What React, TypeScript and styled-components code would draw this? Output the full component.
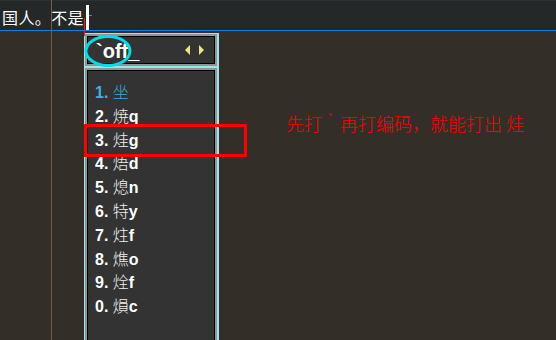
import React from 'react';
import styled, { createGlobalStyle } from 'styled-components';

const Global = createGlobalStyle`
  html, body { margin: 0; padding: 0; background: #332f28; }
  body { font-family: "Liberation Sans", "Noto Sans CJK SC", sans-serif; }
`;

const Screen = styled.div`
  position: relative;
  width: 556px;
  height: 340px;
  overflow: hidden;
  background: #332f28;
  display: flex;
  flex-direction: column;
  &::after {
    content: '';
    position: absolute;
    left: 51px;
    top: 0;
    width: 1px;
    height: 100%;
    background: #7e5a45;
  }
`;

const TopBar = styled.div`
  background: #242828;
  border-top: 1px solid #2d3030;
  border-bottom: 1px solid #0a7ef2;
  box-sizing: border-box;
  height: 31px;
  display: flex;
  align-items: flex-end;
  padding-left: 2px;
`;

const Typed = styled.span`
  color: #ffffff;
  font-family: "Noto Sans CJK SC", sans-serif;
  font-size: 16px;
  font-weight: 400;
  line-height: 26px;
  letter-spacing: 0.4px;
`;

const Caret = styled.span`
  display: block;
  flex: none;
  align-self: flex-end;
  width: 3px;
  height: 25px;
  margin-left: 2px;
  background: #ffffff;
  position: relative;
  z-index: 4;
`;

const Body = styled.div`
  flex: 1;
`;

const ImeMark = styled.div`
  position: absolute;
  left: 84px;
  top: 18px;
  width: 1px;
  height: 18px;
  background: #ff1a1a;
  z-index: 3;
`;

const Tick = styled.div`
  position: absolute;
  left: 89px;
  top: 15px;
  width: 3px;
  height: 1px;
  background: #2a8cf0;
  z-index: 5;
`;

const Popup = styled.div`
  position: absolute;
  left: 84px;
  top: 33px;
  width: 135px;
  height: 312px;
  box-sizing: border-box;
  background: #9fe2ec;
  padding: 1px 2px 0 1px;
  display: flex;
  flex-direction: column;
  gap: 2px;
  z-index: 1;
`;

const Panel = styled.div<{ $grow?: boolean }>`
  background: #333333;
  border: 2px solid #8d9595;
  box-shadow: inset 0 0 0 1px #000;
  box-sizing: border-box;
  ${(p) => (p.$grow ? 'flex: 1;' : 'height: 32px; flex: none;')}
`;

const Header = styled(Panel)`
  display: flex;
  align-items: center;
  padding: 2px 10px 0 9px;
`;

const Code = styled.span`
  color: #ffffff;
  font-weight: 700;
  font-size: 20px;
  line-height: 22px;
  flex: 1;
`;

const Pager = styled.svg`
  display: block;
  margin-top: -2px;
`;

const List = styled(Panel)`
  padding: 10px 0 0 8px;
`;

const Item = styled.div<{ $active?: boolean }>`
  height: 23.8px;
  line-height: 23.8px;
  white-space: nowrap;
  color: ${(p) => (p.$active ? '#3ab3e4' : '#ffffff')};
  font-size: 16px;
`;

const Num = styled.span`
  font-weight: 700;
`;

const Han = styled.span`
  font-family: "Noto Sans CJK SC", sans-serif;
  font-weight: 300;
  opacity: 0.92;
`;

const Key = styled.span`
  font-weight: 700;
`;

const Circle = styled.svg`
  position: absolute;
  left: 84px;
  top: 34px;
  z-index: 2;
`;

const Highlight = styled.div`
  position: absolute;
  left: 84px;
  top: 124px;
  width: 163px;
  height: 33px;
  box-sizing: border-box;
  border: 3px solid #ff0000;
  z-index: 2;
`;

const Note = styled.div`
  position: absolute;
  left: 286px;
  top: 112px;
  color: #ff0000;
  font-family: "Noto Sans CJK SC", sans-serif;
  font-weight: 300;
  font-size: 18px;
  line-height: 22px;
  white-space: nowrap;
`;

const items: { n: string; h: string; k: string }[] = [
  { n: '1.', h: '坐', k: '' },
  { n: '2.', h: '焼', k: 'q' },
  { n: '3.', h: '烓', k: 'g' },
  { n: '4.', h: '焐', k: 'd' },
  { n: '5.', h: '熄', k: 'n' },
  { n: '6.', h: '特', k: 'y' },
  { n: '7.', h: '炷', k: 'f' },
  { n: '8.', h: '燋', k: 'o' },
  { n: '9.', h: '烇', k: 'f' },
  { n: '0.', h: '熉', k: 'c' },
];

export default function App() {
  return (
    <Screen>
      <Global />
      <TopBar>
        <Typed>国人。不是</Typed>
        <Caret />
      </TopBar>
      <Body />
      <ImeMark />
      <Tick />
      <Popup>
        <Header>
          <Code>`off_</Code>
          <Pager width="20" height="11" viewBox="0 0 20 11">
            <polygon points="5,0 5,10 0,5" fill="#e8e88a" />
            <polygon points="14,0 19,5 14,10" fill="#e8e88a" />
          </Pager>
        </Header>
        <List $grow>
          {items.map((it, i) => (
            <Item key={it.n} $active={i === 0}>
              <Num>{it.n} </Num>
              <Han>{it.h}</Han>
              <Key>{it.k}</Key>
            </Item>
          ))}
        </List>
      </Popup>
      <Circle width="48" height="34" viewBox="0 0 48 34">
        <ellipse cx="24" cy="17" rx="22" ry="14.5" fill="none" stroke="#00dce8" strokeWidth="3" />
      </Circle>
      <Highlight />
      <Note>先打｀再打编码，就能打出 烓</Note>
    </Screen>
  );
}
